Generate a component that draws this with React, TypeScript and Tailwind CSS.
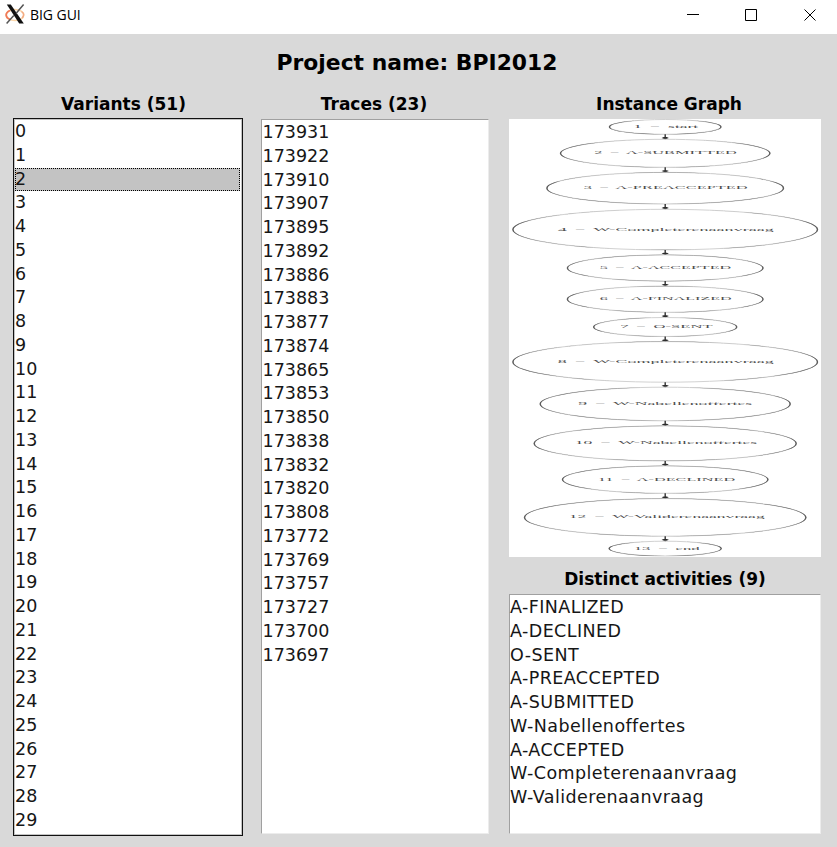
import React from "react";

const variants = Array.from({ length: 30 }, (_, i) => String(i));

const traces = [
  "173931", "173922", "173910", "173907", "173895", "173892", "173886", "173883",
  "173877", "173874", "173865", "173853", "173850", "173838", "173832", "173820",
  "173808", "173772", "173769", "173757", "173727", "173700", "173697",
];

const activities = [
  "A-FINALIZED", "A-DECLINED", "O-SENT", "A-PREACCEPTED", "A-SUBMITTED",
  "W-Nabellenoffertes", "A-ACCEPTED", "W-Completerenaanvraag", "W-Validerenaanvraag",
];

type GraphNode = { label: string; cy: number; rx: number; ry: number; from: number; to: number };

// Coordinates are in pixels of the graph panel.
const nodes: GraphNode[] = [
  { label: "1 = start", cy: 7.9, rx: 55.7, ry: 7.4, from: 124.5, to: 189.5 },
  { label: "2 = A-SUBMITTED", cy: 34.3, rx: 104.7, ry: 14, from: 85.5, to: 228 },
  { label: "3 = A-PREACCEPTED", cy: 69.2, rx: 118.3, ry: 15.8, from: 75, to: 239 },
  { label: "4 = W-Completerenaanvraag", cy: 110.6, rx: 152.3, ry: 20.3, from: 49, to: 265 },
  { label: "5 = A-ACCEPTED", cy: 149, rx: 97.8, ry: 13.1, from: 91, to: 222.5 },
  { label: "6 = A-FINALIZED", cy: 180.2, rx: 97.8, ry: 13.1, from: 91, to: 223 },
  { label: "7 = O-SENT", cy: 208, rx: 71.5, ry: 9.5, from: 111.5, to: 204 },
  { label: "8 = W-Completerenaanvraag", cy: 242.9, rx: 152.3, ry: 20.3, from: 49, to: 265 },
  { label: "9 = W-Nabellenoffertes", cy: 285, rx: 125, ry: 16.8, from: 69.5, to: 243.5 },
  { label: "10 = W-Nabellenoffertes", cy: 324.4, rx: 131, ry: 17.5, from: 66, to: 248.5 },
  { label: "11 = A-DECLINED", cy: 360.6, rx: 102.7, ry: 13.7, from: 89, to: 226.5 },
  { label: "12 = W-Validerenaanvraag", cy: 398.4, rx: 140.7, ry: 18.8, from: 60, to: 256 },
  { label: "13 = end", cy: 429.6, rx: 56, ry: 7.4, from: 125, to: 191 },
];

const CX = 156.5;
const SX = 1.2;
const SY = 0.12;
const TEXT_SY = 0.22;

function InstanceGraph() {
  return (
    <svg width="312" height="438" viewBox="0.3 0 312 438" className="block bg-white">
      {nodes.map((n, i) => {
        const next = nodes[i + 1];
        const bottom = n.cy + n.ry;
        const tip = next ? next.cy - next.ry : 0;
        return (
          <g key={n.label}>
            <ellipse cx={CX} cy={n.cy} rx={n.rx} ry={n.ry} fill="none" stroke="#d2d2d2" strokeWidth="1" />
            <g transform={`translate(${CX} ${n.cy}) scale(${SX} ${SY})`}>
              <ellipse rx={n.rx / SX} ry={n.ry / SY} fill="none" stroke="#5c5c5c" strokeWidth="1.2" />
            </g>
            <g transform={`translate(${n.from} ${n.cy + 1}) scale(${SX} ${TEXT_SY})`}>
              <text
                fontFamily="Liberation Serif, serif"
                fontSize="14"
                wordSpacing="3"
                textLength={(n.to - n.from) / SX}
                lengthAdjust="spacingAndGlyphs"
                fill="#4c4c4c"
              >
                {n.label}
              </text>
            </g>
            {next && (
              <g>
                <line x1={CX} x2={CX} y1={bottom} y2={tip - 0.5} stroke="#333" strokeWidth="1.4" />
                <path d={`M${CX - 3.6} ${tip - 1.4}l2-.8h3.200l2 .8-3.600 1.600z`} fill="#2c2c2c" />
              </g>
            )}
          </g>
        );
      })}
    </svg>
  );
}

function Heading({ children }: { children: React.ReactNode }) {
  return <h2 className="whitespace-nowrap pt-px text-center text-[17px] font-bold leading-[19px]">{children}</h2>;
}

function Rows({ items, selected }: { items: string[]; selected?: number }) {
  return (
    <ul className="pt-px text-[17.5px] text-[#161616]">
      {items.map((t, i) => (
        <li
          key={t}
          className={
            i === selected
              ? "h-[23.76px] whitespace-nowrap bg-[#c3c3c3] leading-[23.76px] outline-1 -outline-offset-1 outline-dotted outline-black"
              : "h-[23.76px] whitespace-nowrap leading-[23.76px]"
          }
        >
          {t}
        </li>
      ))}
    </ul>
  );
}

function XLogo() {
  return (
    <svg width="20" height="20" viewBox="0 0 20 20" className="block">
      <ellipse cx="10" cy="11" rx="8.8" ry="5.6" fill="none" stroke="#fbd6a8" strokeWidth="1.5" />
      <path d="M5 6.500C-.5 9 .3 13.500 5 15.500" fill="none" stroke="#f07a58" strokeWidth="1.800" />
      <path d="M16.500 7.500c3 2 2.500 4.500.5 6.500" fill="none" stroke="#f3ab84" strokeWidth="1.500" />
      <path d="M1.800.5h4L18.800 19.500h-4.600z" fill="#111" />
      <path d="M18.600.5 11 9.600M8.800 11.600 1.600 19.500" stroke="#555" strokeWidth="1.500" />
    </svg>
  );
}

export default function App() {
  return (
    <div className="flex h-[847px] w-[837px] flex-col overflow-hidden bg-[#d9d9d9] font-['DejaVu_Sans',sans-serif] text-black">
      <header className="flex h-[34px] shrink-0 items-start bg-white">
        <div className="pl-[5px] pt-1">
          <XLogo />
        </div>
        <div className="pl-[5px] pt-[6px] font-['Open_Sans',sans-serif] text-[14px] leading-[18px] tracking-[-0.05px]">BIG GUI</div>
        <svg width="130" height="12" viewBox="0 0 130 12" className="ml-auto mr-[20px] mt-[9px]" fill="none" stroke="#000">
          <path d="M0 5.5h12M58.5.5h11v11h-11z" />
          <path d="m117.5.5 11 11m0-11-11 11" />
        </svg>
      </header>

      <h1 className="mt-[15px] pr-[3px] text-center text-[21.85px] font-bold leading-[28px]">Project name: BPI2012</h1>

      <main className="mt-[17px] flex h-[753px] pl-[13px]">
        <section className="w-[230px]">
          <div className="pr-[9px]">
            <Heading>Variants (51)</Heading>
          </div>
          <div className="mt-[4px] h-[718px] border border-[#111] bg-white pl-px pr-[2px] shadow-[inset_0_0_0_1px_#c4c4c4]">
            <Rows items={variants} selected={2} />
          </div>
        </section>

        <section className="ml-[18px] w-[228px]">
          <div className="pr-[2px]">
            <Heading>Traces (23)</Heading>
          </div>
          <div className="mt-[5px] h-[715px] border border-[#ececec] border-l-[#a0a0a0] border-t-[#a0a0a0] bg-white pl-[0.5px]">
            <Rows items={traces} />
          </div>
        </section>

        <section className="ml-[20px] w-[312px]">
          <div className="pl-[8px]">
            <Heading>Instance Graph</Heading>
          </div>
          <div className="mt-[5px] h-[438px]">
            <InstanceGraph />
          </div>
          <div className="mt-[12px]">
            <Heading>Distinct activities (9)</Heading>
          </div>
          <div className="mt-[5px] h-[240px] border border-[#ececec] border-l-[#a0a0a0] border-t-[#a0a0a0] bg-white tracking-[0.42px]">
            <Rows items={activities} />
          </div>
        </section>
      </main>
    </div>
  );
}
